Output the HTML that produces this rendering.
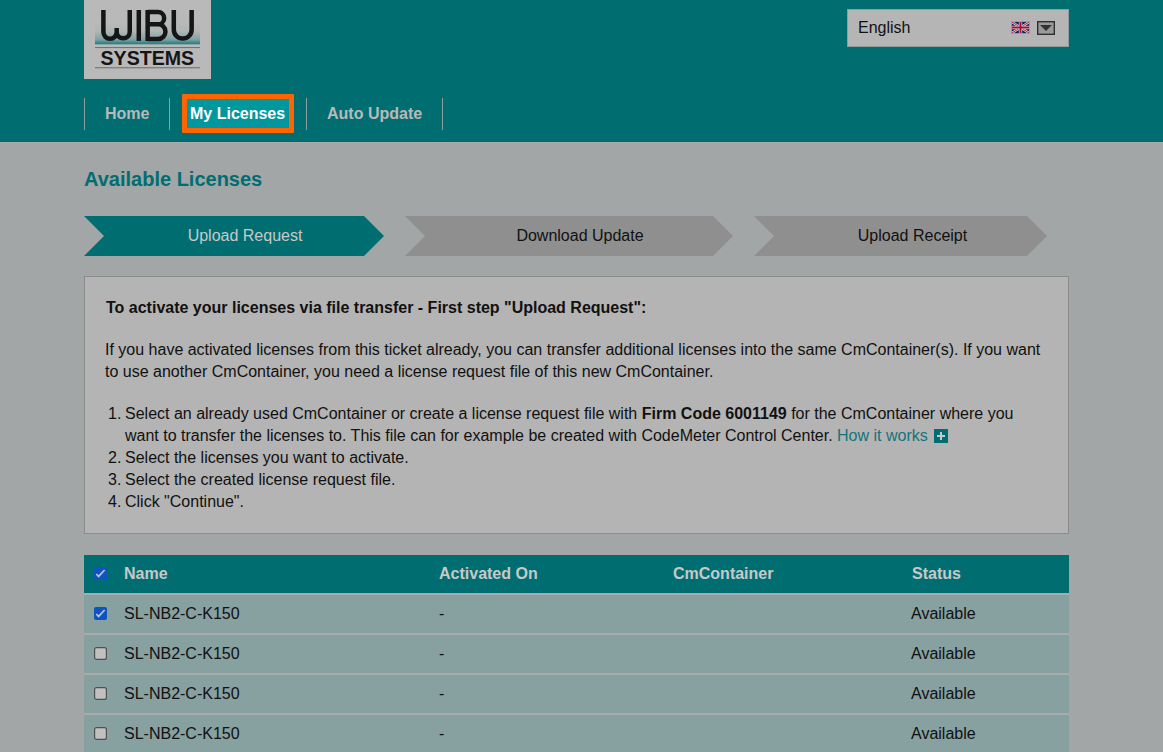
<!DOCTYPE html>
<html>
<head>
<meta charset="utf-8">
<style>
html,body{margin:0;padding:0;}
body{width:1163px;height:752px;overflow:hidden;background:#a2a6a6;font-family:"Liberation Sans",sans-serif;font-size:16px;color:#111;position:relative;}
.abs{position:absolute;}
#header{left:0;top:0;width:1163px;height:142px;background:#006e71;}
#logo{left:84px;top:0;width:127px;height:79px;background:#b9b9b9;}
#lang{left:847px;top:9px;width:220px;height:36px;background:#b5b5b5;border:1px solid #8f9c9c;}
#lang .t{position:absolute;left:10px;top:8px;line-height:20px;}
.sep{position:absolute;top:98px;width:1px;height:32px;background:#8f9f9f;}
.nav{position:absolute;top:103px;font-weight:bold;line-height:22px;color:#b9b9b9;white-space:nowrap;}
#hl{left:182px;top:94px;width:102px;height:29px;border:5px solid #fe6500;border-radius:1px;background:#00979e;}
h1{position:absolute;margin:0;left:84px;top:167px;font-size:20px;line-height:24px;color:#006e71;font-weight:bold;white-space:nowrap;}
.step{position:absolute;top:216px;height:40px;}
.step span{position:absolute;top:0;line-height:40px;width:100%;text-align:center;}
#box{left:84px;top:276px;width:983px;height:256px;background:#b4b4b4;border:1px solid #8b8b8b;}
.ln{position:absolute;white-space:nowrap;line-height:22px;}
#tbl{left:84px;top:555px;width:985px;height:197px;background:#a9abab;}
.row{position:absolute;left:0;width:985px;height:38px;}
.hdr{background:#006e71;color:#c8c8c8;font-weight:bold;}
.dat{background:#87a0a0;color:#111;}
.cell{position:absolute;top:8px;line-height:22px;white-space:nowrap;}
.cb{position:absolute;left:10px;top:12px;width:13px;height:13px;}
</style>
</head>
<body>
<div id="header" class="abs"></div><div class="abs" style="left:0;top:141px;width:1163px;height:1px;background:#006870"></div><div class="abs" style="left:0;top:142px;width:1163px;height:1px;background:#aeabab"></div>
<div id="logo" class="abs"><svg width="127" height="79" viewBox="84 0 127 79" style="position:absolute;left:0;top:0">
<defs><linearGradient id="lg" x1="0" y1="0" x2="0" y2="1"><stop offset="0" stop-color="#b9b9b9"/><stop offset="0.45" stop-color="#b2b6b7"/><stop offset="0.8" stop-color="#7fa2a4"/><stop offset="1" stop-color="#1b7c80"/></linearGradient></defs>
<rect x="95" y="20" width="105" height="24.3" fill="url(#lg)"/>
<g fill="none" stroke="#151515" stroke-width="4.5">
<path d="M103.4,10 V32.1 A6.65,6.65 0 0 0 116.7,32.1 V28 M116.7,32.1 A6.53,6.53 0 0 0 129.75,32.1 V10"/>
<path d="M138.8,10 V40.9"/>
<path d="M147.65,10 V40.9 M147.65,12.05 H158 A6.15,6.125 0 0 1 158,24.3 H147.65 M158,24.3 H158.1 A7.35,7.325 0 0 1 158.1,38.95 H147.65"/>
<path d="M173.8,10 V29.7 A8.925,8.925 0 0 0 191.65,29.7 V10"/>
</g>
<rect x="95" y="47" width="105" height="1.1" fill="#727272"/>
<rect x="95" y="67.2" width="105" height="1.1" fill="#727272"/>
<text x="100.5" y="64.5" font-family="Liberation Sans" font-weight="bold" font-size="19.5" fill="#151515" textLength="93.6" lengthAdjust="spacingAndGlyphs">SYSTEMS</text>
</svg></div>
<div id="lang" class="abs"><span class="t">English</span>
<svg style="position:absolute;left:163px;top:11px" width="19" height="13" viewBox="0 0 19 13">
<defs><clipPath id="fc"><rect x="1" y="1" width="17" height="11"/></clipPath></defs>
<rect x="0" y="0" width="19" height="13" fill="#9c9c9c"/>
<rect x="1" y="1" width="17" height="11" fill="#0b1a62"/>
<g clip-path="url(#fc)">
<path d="M1,1 L18,12 M18,1 L1,12" stroke="#d4d4d4" stroke-width="2.4"/>
<path d="M1,1 L18,12 M18,1 L1,12" stroke="#a81030" stroke-width="0.9"/>
<path d="M9.5,1 V12 M1,6.5 H18" stroke="#d4d4d4" stroke-width="3.4"/>
<path d="M9.5,1 V12 M1,6.5 H18" stroke="#a81030" stroke-width="2"/>
</g>
</svg>
<svg style="position:absolute;left:189px;top:11px" width="18" height="14" viewBox="0 0 18 14">
<rect x="0.7" y="0.7" width="16.6" height="12.6" fill="#9a9a9a" stroke="#303030" stroke-width="1.4"/>
<polygon points="3,4 15,4 9,10" fill="#333"/>
</svg></div>

<div class="sep" style="left:84px"></div>
<div class="sep" style="left:169px"></div>
<div class="sep" style="left:306px"></div>
<div class="sep" style="left:442px"></div>
<div class="nav" style="left:105px">Home</div>
<div id="hl" class="abs"></div>
<div class="nav" style="left:190px;color:#fff">My Licenses</div>
<div class="nav" style="left:327px">Auto Update</div>

<h1>Available Licenses</h1>

<div class="step" style="left:84px;width:300px">
<svg class="abs" style="left:0;top:0" width="300" height="40"><polygon points="0,0 280,0 300,20 280,40 0,40 20,20" fill="#006e71"/></svg>
<span style="color:#c8c8c8;left:11px">Upload Request</span>
</div>
<div class="step" style="left:405px;width:328px">
<svg class="abs" style="left:0;top:0" width="328" height="40"><polygon points="0,0 308,0 328,20 308,40 0,40 20,20" fill="#8f8f8f"/></svg>
<span style="left:11px">Download Update</span>
</div>
<div class="step" style="left:754px;width:293px">
<svg class="abs" style="left:0;top:0" width="293" height="40"><polygon points="0,0 273,0 293,20 273,40 0,40 20,20" fill="#8f8f8f"/></svg>
<span style="left:12px">Upload Receipt</span>
</div>

<div id="box" class="abs">
<div class="ln" style="left:21px;top:20px;font-weight:bold">To activate your licenses via file transfer - First step "Upload Request":</div>
<div class="ln" style="left:20px;top:62px">If you have activated licenses from this ticket already, you can transfer additional licenses into the same CmContainer(s). If you want</div>
<div class="ln" style="left:20px;top:84px">to use another CmContainer, you need a license request file of this new CmContainer.</div>
<div class="ln" style="left:23px;top:126px">1.</div>
<div class="ln" style="left:40px;top:126px">Select an already used CmContainer or create a license request file with <b>Firm Code 6001149</b> for the CmContainer where you</div>
<div class="ln" style="left:40px;top:148px">want to transfer the licenses to. This file can for example be created with CodeMeter Control Center. <span style="color:#14737a">How it works</span> <svg style="position:absolute;left:809px;top:4px" width="14" height="14"><rect width="14" height="14" fill="#006e71"/><rect x="3" y="6" width="8" height="2" fill="#c8c8c8"/><rect x="6" y="3" width="2" height="8" fill="#c8c8c8"/></svg></div>
<div class="ln" style="left:23px;top:170px">2.</div>
<div class="ln" style="left:40px;top:170px">Select the licenses you want to activate.</div>
<div class="ln" style="left:23px;top:192px">3.</div>
<div class="ln" style="left:40px;top:192px">Select the created license request file.</div>
<div class="ln" style="left:23px;top:214px">4.</div>
<div class="ln" style="left:40px;top:214px">Click "Continue".</div>
</div>

<div id="tbl" class="abs">
<div class="row hdr" style="top:0"><svg class="cb" width="13" height="13" viewBox="0 0 13 13"><rect width="13" height="13" rx="2" fill="#0c54c2"/><path d="M2.3,7 L4.6,9.4 L10.6,3" fill="none" stroke="#c4c4c4" stroke-width="1.7"/></svg><div class="cell" style="left:40px">Name</div><div class="cell" style="left:355px">Activated On</div><div class="cell" style="left:589px">CmContainer</div><div class="cell" style="left:828px">Status</div></div>
<div class="row dat" style="top:40px"><svg class="cb" width="13" height="13" viewBox="0 0 13 13"><rect width="13" height="13" rx="2" fill="#0c54c2"/><path d="M2.3,7 L4.6,9.4 L10.6,3" fill="none" stroke="#c4c4c4" stroke-width="1.7"/></svg><div class="cell" style="left:40px">SL-NB2-C-K150</div><div class="cell" style="left:355px">-</div><div class="cell" style="left:827px">Available</div></div>
<div class="row dat" style="top:80px"><svg class="cb" width="13" height="13" viewBox="0 0 13 13"><rect x="0.6" y="0.6" width="11.8" height="11.8" rx="2" fill="#c0c0c0" stroke="#505050" stroke-width="1.2"/></svg><div class="cell" style="left:40px">SL-NB2-C-K150</div><div class="cell" style="left:355px">-</div><div class="cell" style="left:827px">Available</div></div>
<div class="row dat" style="top:120px"><svg class="cb" width="13" height="13" viewBox="0 0 13 13"><rect x="0.6" y="0.6" width="11.8" height="11.8" rx="2" fill="#c0c0c0" stroke="#505050" stroke-width="1.2"/></svg><div class="cell" style="left:40px">SL-NB2-C-K150</div><div class="cell" style="left:355px">-</div><div class="cell" style="left:827px">Available</div></div>
<div class="row dat" style="top:160px"><svg class="cb" width="13" height="13" viewBox="0 0 13 13"><rect x="0.6" y="0.6" width="11.8" height="11.8" rx="2" fill="#c0c0c0" stroke="#505050" stroke-width="1.2"/></svg><div class="cell" style="left:40px">SL-NB2-C-K150</div><div class="cell" style="left:355px">-</div><div class="cell" style="left:827px">Available</div></div>
</div>
</body>
</html>
